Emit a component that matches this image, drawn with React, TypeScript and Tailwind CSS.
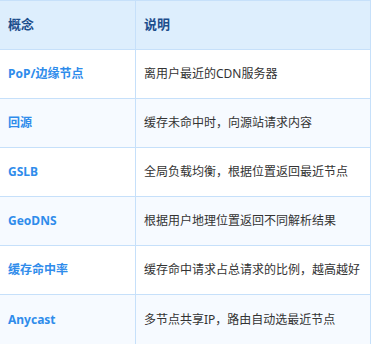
import React from 'react';

const rows = [
  { term: 'PoP/边缘节点', desc: '离用户最近的CDN服务器' },
  { term: '回源', desc: '缓存未命中时，向源站请求内容' },
  { term: 'GSLB', desc: '全局负载均衡，根据位置返回最近节点' },
  { term: 'GeoDNS', desc: '根据用户地理位置返回不同解析结果' },
  { term: '缓存命中率', desc: '缓存命中请求占总请求的比例，越高越好' },
  { term: 'Anycast', desc: '多节点共享IP，路由自动选最近节点' },
];

export default function App() {
  return (
    <main className="h-[344px] w-[373px] overflow-hidden bg-white font-['Noto_Sans','Noto_Sans_CJK_SC',sans-serif]">
      <div className="w-[371px] border-t border-r border-b border-[#c6e0fa]">
        <div className="grid h-[49px] grid-cols-[136px_1fr] border-b border-[#c6e0fa] bg-[#ddeefd]">
          <div className="flex items-center border-r border-[#c6e0fa] pl-2 text-[13px] font-bold text-[#1c4d8c]">概念</div>
          <div className="flex items-center pl-2 text-[13px] font-bold text-[#1c4d8c]">说明</div>
        </div>
        {rows.map((row, i) => (
          <div
            key={row.term}
            className={`grid h-[49px] grid-cols-[136px_1fr] ${i < rows.length - 1 ? 'border-b' : ''} border-[#c6e0fa] ${i % 2 === 1 ? 'bg-[#f6faff]' : 'bg-white'}`}
          >
            <div className="flex items-center border-r border-[#c6e0fa] pl-2 text-[12px] font-bold text-[#2f8ceb]">{row.term}</div>
            <div className="flex items-center whitespace-nowrap pl-2 text-[12px] text-[#333]">{row.desc}</div>
          </div>
        ))}
      </div>
    </main>
  );
}
